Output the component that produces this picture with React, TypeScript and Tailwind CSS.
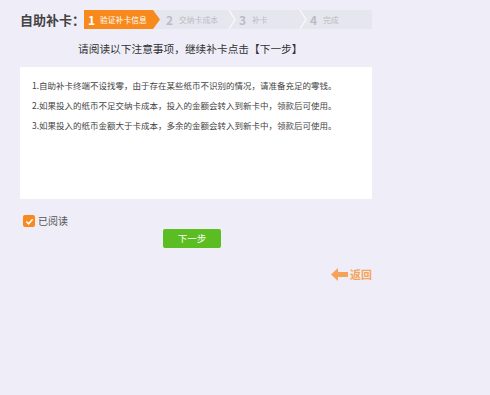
import React, { useState } from 'react';

const notes = [
  '1.自助补卡终端不设找零，由于存在某些纸币不识别的情况，请准备充足的零钱。',
  '2.如果投入的纸币不足交纳卡成本，投入的金额会转入到新卡中，领款后可使用。',
  '3.如果投入的纸币金额大于卡成本，多余的金额会转入到新卡中，领款后可使用。',
];

const Chevron = () => (
  <svg width="8" height="19" viewBox="0 0 8 19" className="shrink-0 -ml-[2px]">
    <polyline points="1,0 7,9.5 1,19" fill="none" stroke="#f6f6fa" strokeWidth="1.5" />
  </svg>
);

export default function App() {
  const [checked, setChecked] = useState(true);

  return (
    <div
      className="w-[490px] h-[395px] bg-[#efeef8] pl-[20px] pt-[10px] text-[#333]"
      style={{ fontFamily: '"Noto Sans CJK SC", "Noto Sans", sans-serif' }}
    >
      {/* 标题和步骤 */}
      <div className="flex items-center h-[19px]">
        <div className="w-[64px] shrink-0 whitespace-nowrap text-[13px] font-bold text-[#444] leading-none">自助补卡：</div>
        <div className="flex h-[19px] w-[288px] bg-[#e6e6ee] text-[#bcbcc4]">
          <div className="flex items-center w-[76px] pl-[4px] bg-[#f7891d] text-white [clip-path:polygon(0_0,calc(100%-7px)_0,100%_50%,calc(100%-7px)_100%,0_100%)]">
            <span className="text-[12px] font-bold leading-none w-[12px]">1</span>
            <span className="text-[7.8px] leading-none">验证补卡信息</span>
          </div>
          <div className="flex items-center w-[70px] pl-[6px]">
            <span className="text-[12px] font-bold leading-none w-[13px]">2</span>
            <span className="text-[7.8px] leading-none">交纳卡成本</span>
          </div>
          <Chevron />
          <div className="flex items-center w-[65px] pl-[3px]">
            <span className="text-[12px] font-bold leading-none w-[13px]">3</span>
            <span className="text-[7.8px] leading-none">补卡</span>
          </div>
          <Chevron />
          <div className="flex items-center pl-[3px]">
            <span className="text-[12px] font-bold leading-none w-[13px]">4</span>
            <span className="text-[7.8px] leading-none">完成</span>
          </div>
        </div>
      </div>

      <p className="mt-[12px] pl-[58px] text-[10.7px] leading-[16px] text-[#333]">
        请阅读以下注意事项，继续补卡点击【下一步】
      </p>

      {/* 注意事项 */}
      <div className="mt-[10px] w-[352px] h-[132px] bg-white pl-[12px] pt-[8px]">
        {notes.map((n) => (
          <p key={n} className="text-[8.5px] leading-[20px] text-[#444] whitespace-nowrap">
            {n}
          </p>
        ))}
      </div>

      <label className="mt-[16px] ml-[3px] flex items-center gap-[3px] w-fit cursor-pointer" onClick={() => setChecked(!checked)}>
        <span className="w-[12px] h-[12px] rounded-[2px] bg-[#f7891d] flex items-center justify-center">
          {checked && (
            <svg width="9" height="9" viewBox="0 0 10 10">
              <polyline points="1.5,5 4,7.5 8.5,2.5" fill="none" stroke="#fff" strokeWidth="1.8" />
            </svg>
          )}
        </span>
        <span className="text-[10px] leading-none text-[#555]">已阅读</span>
      </label>

      <div className="w-[352px] flex justify-center mt-[2px]">
        <button className="w-[58px] h-[19px] -ml-[8px] bg-[#5cbd22] rounded-[2px] text-white text-[9.5px] leading-none">
          下一步
        </button>
      </div>

      <div className="w-[352px] flex justify-end mt-[20px]">
        <div className="flex items-center gap-[2px] text-[#f6a35a]">
          <svg width="17" height="13" viewBox="0 0 17 13">
            <polygon points="0,6.5 7,0 7,4 17,4 17,9 7,9 7,13" fill="#f6a35a" />
          </svg>
          <span className="text-[11px] font-bold leading-none">返回</span>
        </div>
      </div>
    </div>
  );
}
